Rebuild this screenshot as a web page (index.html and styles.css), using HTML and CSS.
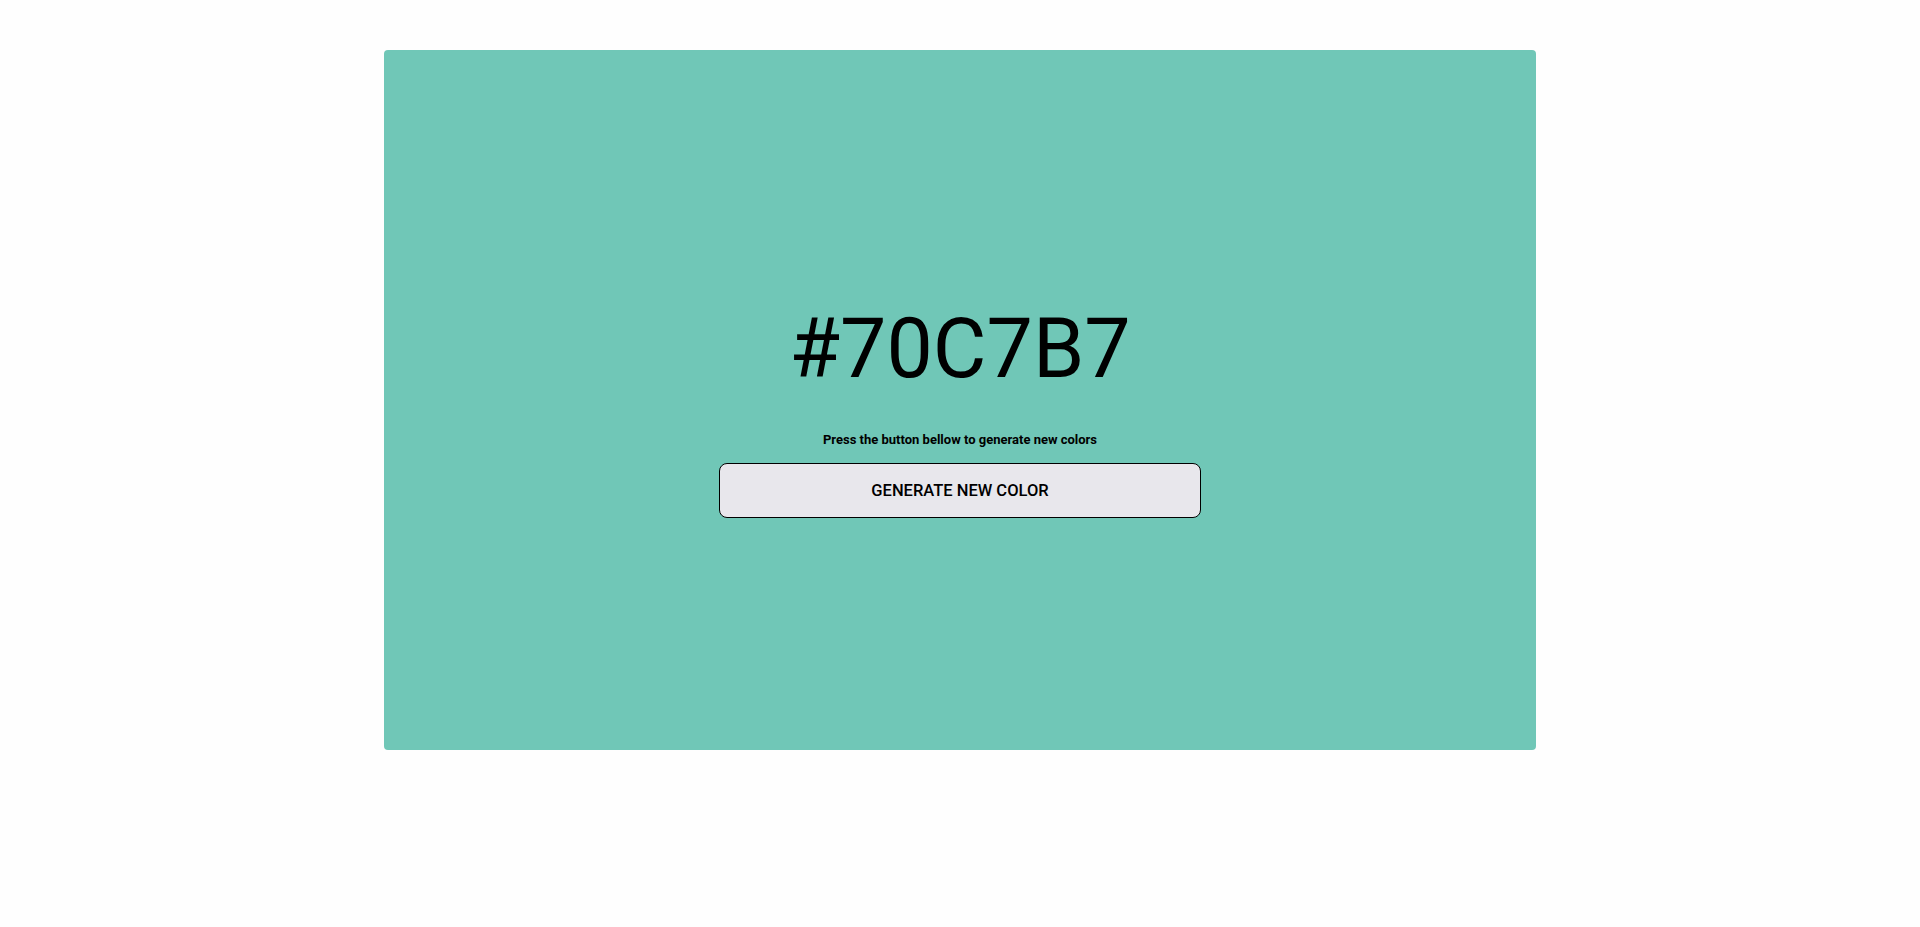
FILE: index.html
```html
<!DOCTYPE html>
<html lang="en">
<head>
<meta charset="utf-8">
<title>Color Generator</title>
<link rel="stylesheet" href="styles.css">
</head>
<body>
<main class="card">
  <h1 class="hex">#70C7B7</h1>
  <p class="hint">Press the button bellow to generate new colors</p>
  <button class="gen-btn" type="button">GENERATE NEW COLOR</button>
</main>
</body>
</html>
```
FILE: styles.css
```css
html, body {
  margin: 0;
  padding: 0;
}
body {
  background: #fefefe;
  font-family: Roboto, "Liberation Sans", sans-serif;
  color: #000;
  padding-top: 50px;
}
.card {
  box-sizing: border-box;
  width: 1152px;
  height: 700px;
  margin: 0 auto;
  background: #70c7b7;
  border-radius: 4px;
  display: flex;
  flex-direction: column;
  align-items: center;
  justify-content: center;
  padding-top: 17px;
}
.hex {
  margin: 0 0 35px;
  font-size: 82.5px;
  font-weight: 400;
  line-height: normal;
}
.hint {
  margin: 0 0 16px;
  font-size: 13px;
  font-weight: 700;
  line-height: normal;
}
.gen-btn {
  box-sizing: border-box;
  width: 482px;
  height: 55px;
  background: #e8e7ec;
  border: 1px solid #000;
  border-radius: 8px;
  font-family: Roboto, "Liberation Sans", sans-serif;
  font-size: 16.5px;
  font-weight: 500;
  color: #000;
  cursor: pointer;
}
```
